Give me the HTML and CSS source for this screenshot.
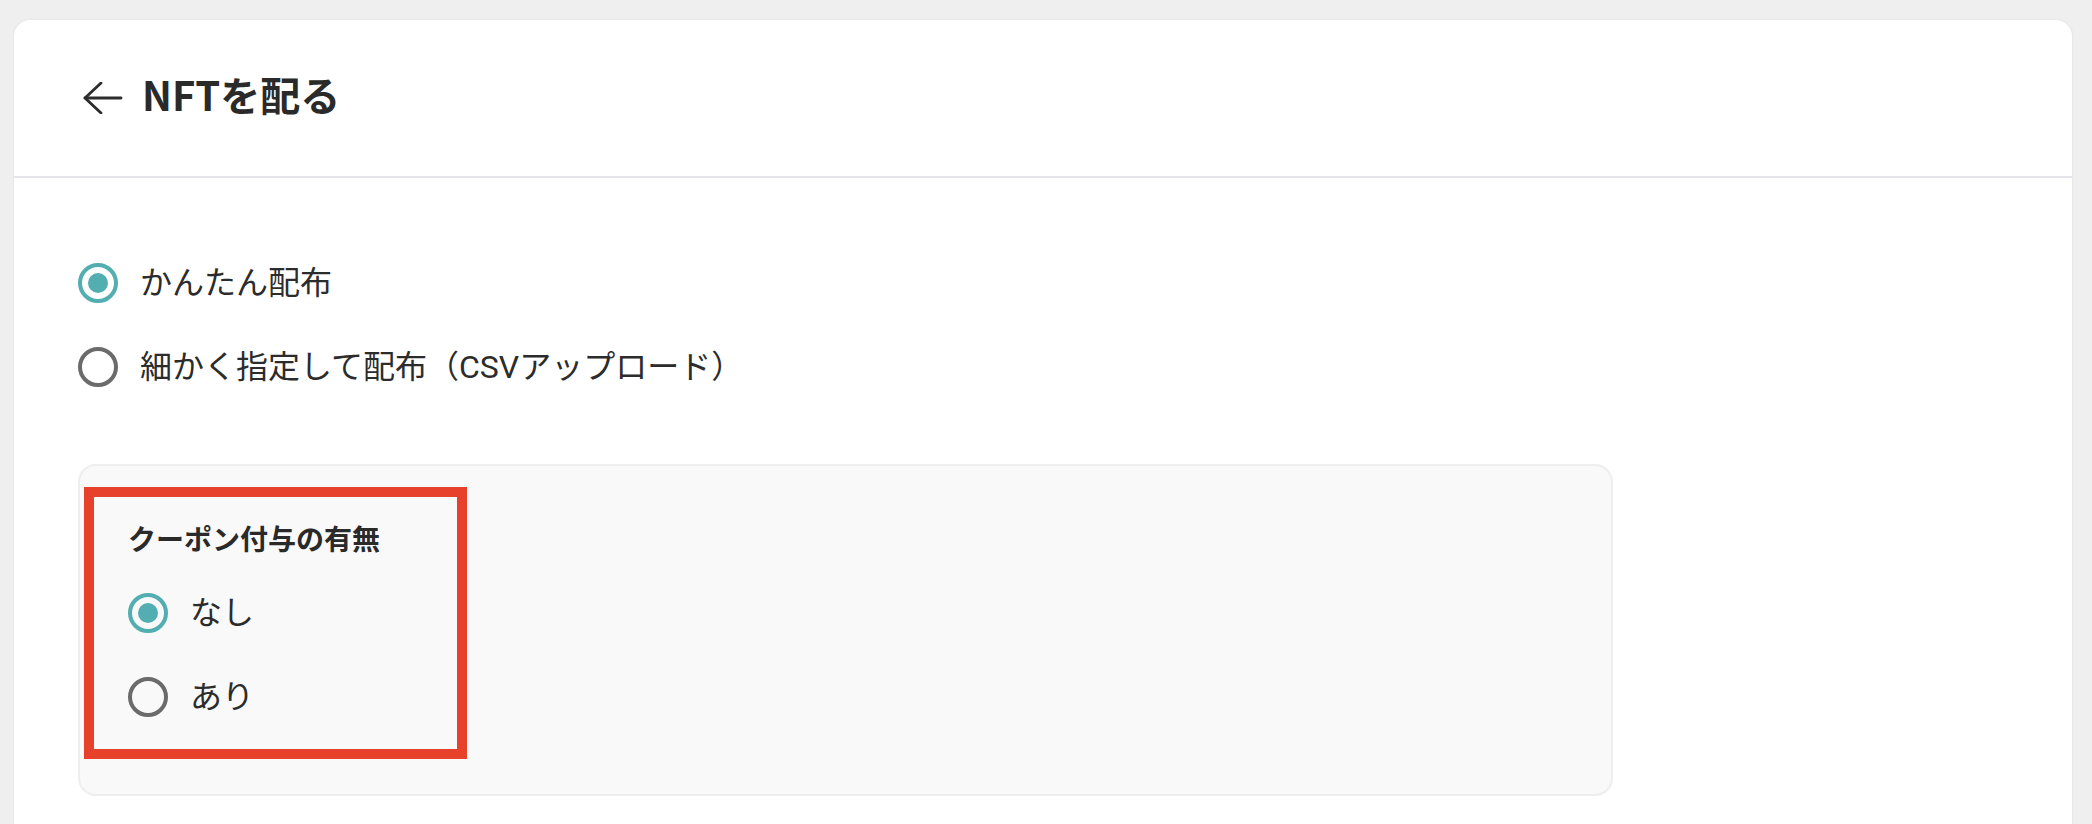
FILE: index.html
```html
<!DOCTYPE html>
<html lang="ja">

<head>
    <meta charset="UTF-8">
    <meta name="viewport" content="width=device-width, initial-scale=1.0">
    <title>NFTを配る</title>
    <link rel="stylesheet" href="styles.css">
</head>

<body>
    <div class="card">
        <div class="card-header">
            <a href="#" class="back-link" aria-label="戻る">
                <svg width="40" height="32" viewBox="0 0 40 32" fill="none" stroke="#2c2c2c" stroke-width="2.8"
                    stroke-linecap="round" stroke-linejoin="round">
                    <path d="M2 16 H38" />
                    <path d="M18 1 L2 16 L18 31" />
                </svg>
            </a>
            <h1>NFTを配る</h1>
        </div>

        <div class="card-body">
            <div class="radio-group">
                <label class="option">
                    <span class="radio checked"></span>
                    <span class="option-text">かんたん配布</span>
                </label>
                <label class="option">
                    <span class="radio"></span>
                    <span class="option-text">細かく指定して配布（CSVアップロード）</span>
                </label>
            </div>

            <div class="panel">
                <div class="highlight">
                    <p class="panel-title">クーポン付与の有無</p>
                    <div class="radio-group inner">
                        <label class="option">
                            <span class="radio checked"></span>
                            <span class="option-text">なし</span>
                        </label>
                        <label class="option">
                            <span class="radio"></span>
                            <span class="option-text">あり</span>
                        </label>
                    </div>
                </div>
            </div>
        </div>
    </div>
</body>

</html>
```

FILE: styles.css
```css
/* General Styles */
body {
    margin: 0;
    padding: 20px 20px 0 14px;
    background-color: #efefef;
    font-family: Roboto, "Noto Sans CJK JP", sans-serif;
    color: #2c2c2c;
}

.card {
    min-height: calc(100vh - 20px);
    background: #ffffff;
    border-radius: 16px 16px 0 0;
    box-shadow: 0 0 3px rgba(0, 0, 0, 0.08);
}

/* Header */
.card-header {
    display: flex;
    align-items: center;
    gap: 19px;
    height: 156px;
    padding-left: 69px;
    border-bottom: 2px solid #e4e4ea;
}

.back-link {
    display: flex;
}

.card-header h1 {
    margin: 0 0 8px;
    font-family: "Noto Sans CJK JP", sans-serif;
    font-size: 40px;
    font-weight: 700;
    color: #2a2a2a;
}

/* Body */
.card-body {
    padding: 63px 64px 40px;
}

.radio-group {
    display: flex;
    flex-direction: column;
}

.option {
    display: flex;
    align-items: center;
    height: 84px;
    margin-left: -22px;
    cursor: pointer;
}

.radio {
    position: relative;
    width: 40px;
    height: 40px;
    margin: 0 22px;
    border: 4px solid #6b6b6b;
    border-radius: 50%;
    box-sizing: border-box;
}

.radio.checked {
    border-color: #52aeb1;
}

.radio.checked::after {
    content: "";
    position: absolute;
    top: 6px;
    left: 6px;
    width: 20px;
    height: 20px;
    border-radius: 50%;
    background: #52aeb1;
}

.option-text {
    font-size: 32px;
    line-height: 1.5;
}

/* Coupon panel */
.panel {
    width: 1535px;
    margin-top: 55px;
    padding: 21px 4px 35px;
    background: #f9f9f9;
    border: 2px solid #eeeeee;
    border-radius: 18px;
    box-sizing: border-box;
}

.highlight {
    width: 329px;
    padding: 23px 0 10px 34px;
    border: 10px solid #e8412b;
}

.panel-title {
    margin: 0;
    font-size: 28px;
    font-weight: 700;
    line-height: 42px;
    color: #2a2a2a;
}

.radio-group.inner {
    margin-top: 9px;
}
```
